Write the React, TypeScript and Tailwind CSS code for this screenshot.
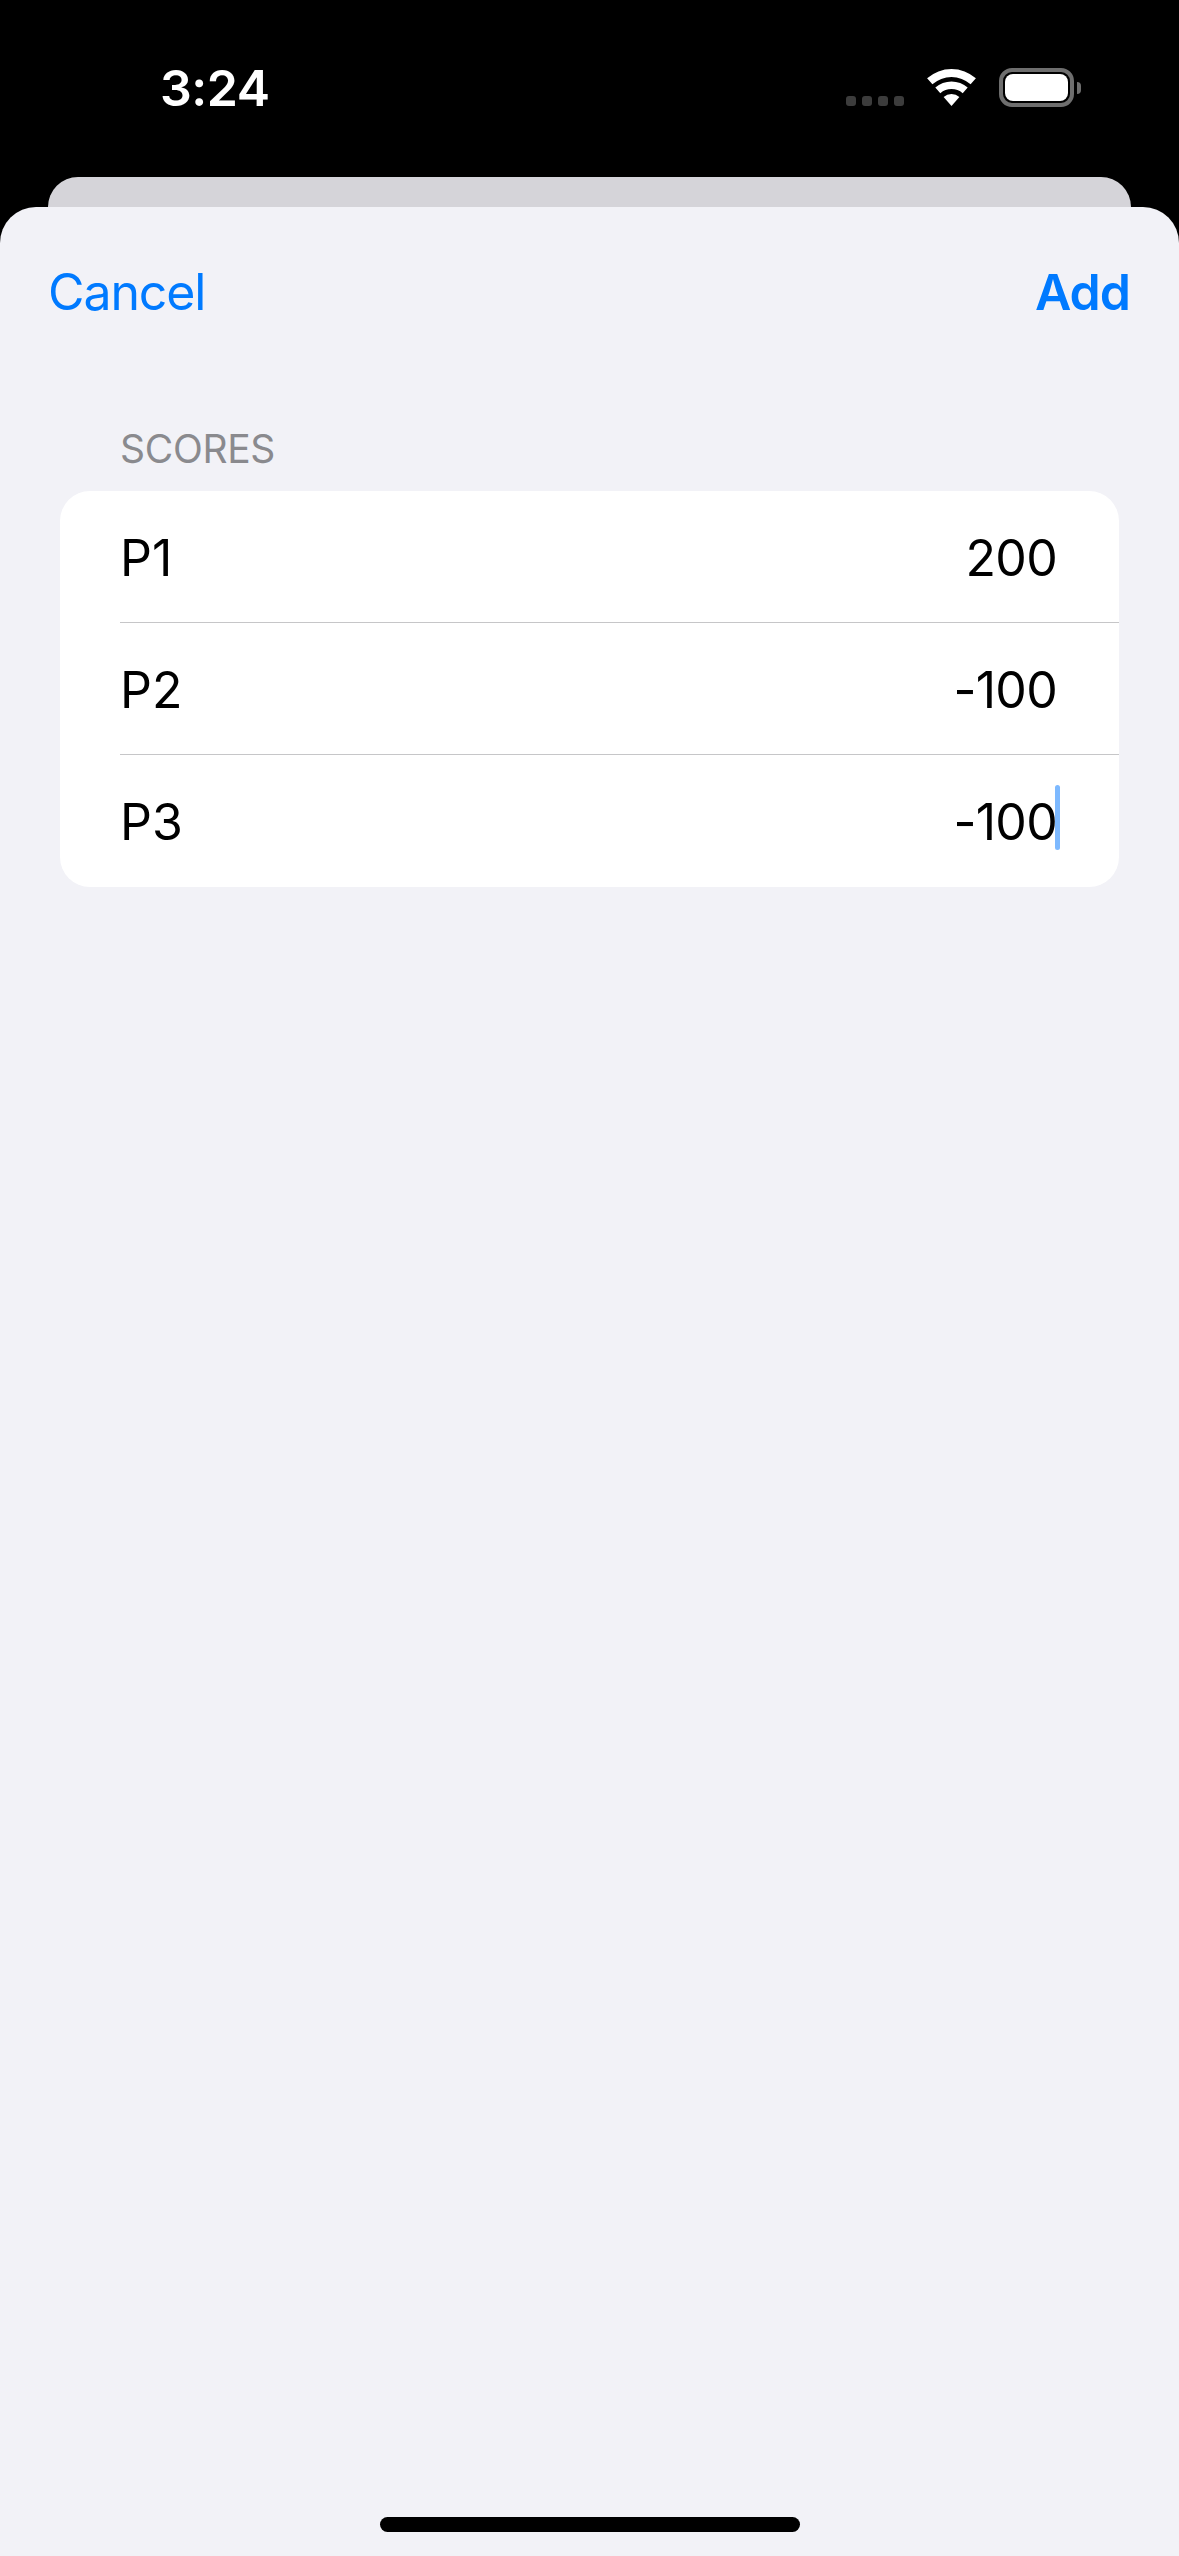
import React from "react";

const rows = [
  { name: "P1", value: "200" },
  { name: "P2", value: "-100" },
  { name: "P3", value: "-100", focused: true },
];

function Wifi() {
  return (
    <svg width="49" height="37" viewBox="0 0 49 37" fill="#fff">
      <path d="M0.1 9.25A37 37 0 0 1 48.9 9.25L43.6 15.25A29 29 0 0 0 5.4 15.25Z" />
      <path d="M8.3 18.6A24.5 24.5 0 0 1 40.7 18.6L35.7 24.25A17 17 0 0 0 13.3 24.25Z" />
      <path d="M16.6 28A12 12 0 0 1 32.4 28L24.5 37Z" />
    </svg>
  );
}

function Battery() {
  return (
    <div className="flex items-center gap-[3px]">
      <div className="w-[75px] h-[39px] rounded-[13px] border-[4px] border-[#6e6e6e] p-[2px]">
        <div className="w-full h-full rounded-[8px] bg-white" />
      </div>
      <div className="w-[4px] h-[12px] bg-[#6e6e6e] rounded-r-[4px]" />
    </div>
  );
}

export default function App() {
  return (
    <div className="w-[1179px] h-[2556px] bg-black flex flex-col overflow-hidden font-['Inter',sans-serif]">
      <div className="h-[177px] shrink-0 relative flex justify-between pl-[160px] pr-[98px]">
        <span className="mt-[58px] h-[60px] text-[50px] leading-[60px] font-semibold text-white tracking-[-0.5px]">
          3:24
        </span>
        <div className="flex items-start pt-[68px]">
          <div className="flex gap-[6px] mt-[28px] mr-[23px]">
            <span className="w-[10px] h-[10px] rounded-[3px] bg-[#3c3c3c]" />
            <span className="w-[10px] h-[10px] rounded-[3px] bg-[#3c3c3c]" />
            <span className="w-[10px] h-[10px] rounded-[3px] bg-[#3c3c3c]" />
            <span className="w-[10px] h-[10px] rounded-[3px] bg-[#3c3c3c]" />
          </div>
          <div className="mt-[1px] mr-[23px] flex">
            <Wifi />
          </div>
          <Battery />
        </div>
      </div>

      <div className="h-[30px] shrink-0 mx-[48px] bg-[#d5d4d9] rounded-t-[30px]" />

      <div className="flex-1 bg-[#f2f2f7] rounded-t-[36px] flex flex-col">
        <div className="flex justify-between items-center pl-[48px] pr-[49px] pt-[54px] text-[#007aff] text-[50px] leading-[62px]">
          <span className="tracking-[-1.1px]">Cancel</span>
          <span className="font-semibold tracking-[-1px]">Add</span>
        </div>

        <div className="px-[60px] pt-[103px]">
          <div className="pl-[60px] text-[39px] leading-[46px] text-[#8a8a8e] tracking-[-0.3px]">SCORES</div>
          <div className="mt-[19px] bg-white rounded-[30px] overflow-hidden">
            {rows.map((r, i) => (
              <div key={r.name} className="pl-[60px]">
                <div
                  className={
                    "h-[132px] pt-[3px] pr-[62px] flex items-center justify-between text-[50px] text-black " +
                    (i < 2 ? "border-b border-[#c6c6c8]" : "")
                  }
                >
                  <span>{r.name}</span>
                  <span className="relative tracking-[-0.7px]">
                    {r.value}
                    {r.focused && (
                      <span className="absolute left-full top-[0px] -ml-[2px] w-[5px] h-[65px] rounded-full bg-[#7db9ff]" />
                    )}
                  </span>
                </div>
              </div>
            ))}
          </div>
        </div>

        <div className="mt-auto mb-[24px] self-center w-[420px] h-[15px] rounded-full bg-black" />
      </div>
    </div>
  );
}
